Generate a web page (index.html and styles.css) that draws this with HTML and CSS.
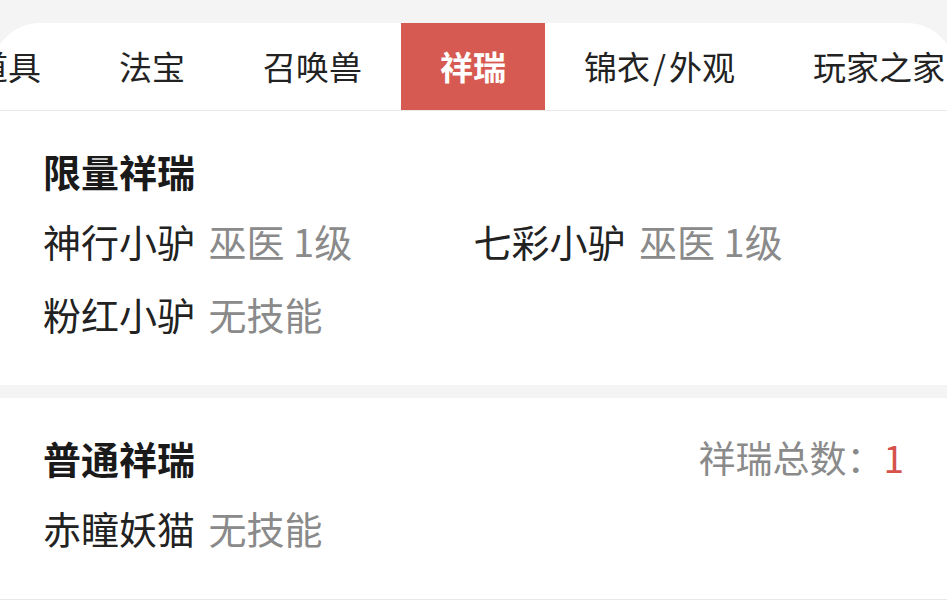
FILE: index.html
```html
<!DOCTYPE html>
<html lang="zh-CN">
<head>
    <meta charset="UTF-8">
    <meta name="viewport" content="width=device-width, initial-scale=1.0">
    <title>祥瑞</title>
    <link rel="stylesheet" href="styles.css">
</head>
<body>
    <div class="top-gap"></div>
    <div class="tab-bar">
        <div class="tab-list">
            <div class="tab">道具</div>
            <div class="tab">法宝</div>
            <div class="tab">召唤兽</div>
            <div class="tab active">祥瑞</div>
            <div class="tab">锦衣<span class="slash">/</span>外观</div>
            <div class="tab">玩家之家</div>
        </div>
    </div>

    <div class="section">
        <div class="section-head">
            <div class="section-title">限量祥瑞</div>
        </div>
        <div class="item-grid">
            <div class="item"><span class="name">神行小驴</span> <span class="skill">巫医 1级</span></div>
            <div class="item"><span class="name">七彩小驴</span> <span class="skill">巫医 1级</span></div>
            <div class="item"><span class="name">粉红小驴</span> <span class="skill">无技能</span></div>
        </div>
    </div>

    <div class="section last">
        <div class="section-head">
            <div class="section-title">普通祥瑞</div>
            <div class="count">祥瑞总数：<span class="num">1</span></div>
        </div>
        <div class="item-grid">
            <div class="item"><span class="name">赤瞳妖猫</span> <span class="skill">无技能</span></div>
        </div>
    </div>
</body>
</html>
```

FILE: styles.css
```css
body{
    margin:0;
    background:#f4f4f4;
    font-family:"Noto Sans CJK SC", "Noto Sans", sans-serif;
    color:#222;
    overflow:hidden;
}
.top-gap{
    height:23px;
}
.tab-bar{
    margin:0 -8px;
    background:#fff;
    border-radius:48px 48px 0 0;
    border-bottom:1px solid #e8e8e8;
    overflow:hidden;
}
.tab-list{
    display:flex;
    margin-left:-56px;
}
.tab{
    flex:none;
    padding:0 39px;
    height:87px;
    line-height:87px;
    font-size:33px;
    color:#222;
    white-space:nowrap;
}
.tab .slash{
    margin:0 3px;
}
.tab.active{
    background:#d65a51;
    color:#fff;
    font-weight:600;
}
.section{
    background:#fff;
    padding:34px 43px 45px 43px;
    margin-bottom:13px;
}
.section.last{
    margin-bottom:0;
    border-bottom:1px solid #e8e8e8;
}
.section-head{
    display:flex;
    justify-content:space-between;
    align-items:center;
    height:50px;
    margin-bottom:20px;
}
.section-title{
    font-size:38px;
    font-weight:700;
    color:#1a1a1a;
}
.count{
    font-size:37px;
    color:#8a8a8a;
}
.count .num{
    color:#d6524a;
}
.item-grid{
    display:grid;
    grid-template-columns:1fr 1fr;
    row-gap:21px;
}
.item{
    font-size:38px;
    line-height:52px;
    white-space:nowrap;
}
.skill{
    margin-left:5px;
    color:#8a8a8a;
}
```
